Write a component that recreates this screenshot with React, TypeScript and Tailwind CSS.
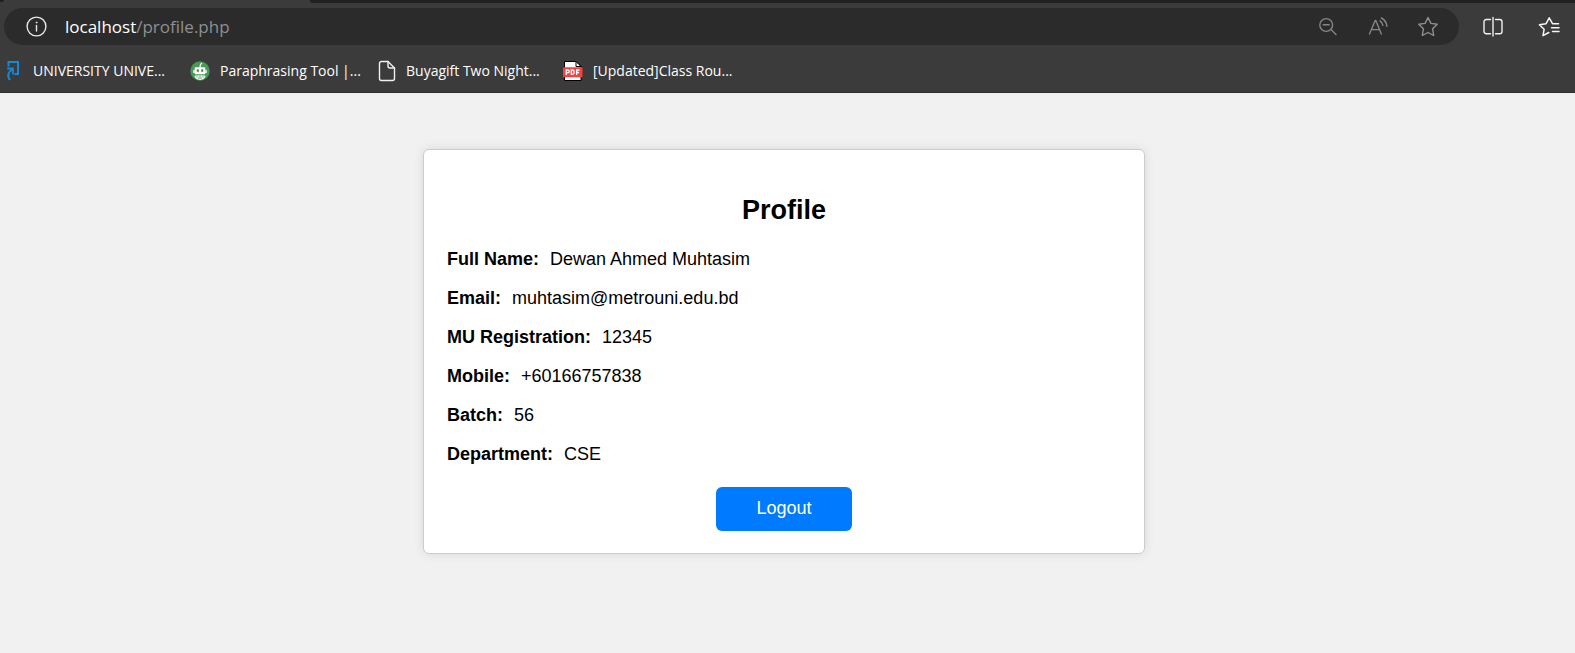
import React from "react";

const iconBase = {
  fill: "none",
  strokeLinecap: "round" as const,
  strokeLinejoin: "round" as const,
};

function InfoIcon() {
  return (
    <svg width="22" height="22" viewBox="0 0 22 22" {...iconBase} stroke="#e8e8e8" strokeWidth="1.4">
      <circle cx="10.500" cy="10.500" r="9.400" />
      <path d="M10.500 9.500v5.500" />
      <circle cx="10.500" cy="6.500" r="0.500" fill="#e8e8e8" strokeWidth="0.8" />
    </svg>
  );
}

function ZoomOutIcon() {
  return (
    <svg width="20" height="20" viewBox="0 0 20 20" {...iconBase} stroke="#858585" strokeWidth="1.4">
      <circle cx="7.200" cy="8" r="6.400" />
      <path d="M4.200 7.700h6M12 12.600l5 5" />
    </svg>
  );
}

function ReadAloudIcon() {
  return (
    <svg width="20" height="20" viewBox="0 0 20 20" {...iconBase} stroke="#858585" strokeWidth="1.4">
      <path d="M1.500 17L7.200 3.500h.6L13.300 17M3.500 12.600h7.900" />
      <path d="M12 3.800c1.500.9 2.500 2.300 2.900 4.600" />
      <path d="M13.300 1c3 1.500 5.200 4.300 5.700 8.400" />
    </svg>
  );
}

function StarIcon() {
  return (
    <svg width="22" height="22" viewBox="0 0 22 22" {...iconBase} stroke="#909090" strokeWidth="1.4">
      <path d="M11 1.500l2.900 5.900 6.300.9-4.600 4.500 1.100 6.700-5.700-3-5.700 3 1.100-6.700-4.600-4.500 6.300-.9z" />
    </svg>
  );
}

function SplitIcon() {
  return (
    <svg width="22" height="22" viewBox="0 0 22 22" {...iconBase} stroke="#f0f0f0" strokeWidth="1.4">
      <path d="M8.500 3.500H4.200A2.200 2.200 0 0 0 2 5.700v9.800a2.200 2.200 0 0 0 2.200 2.200h4.300" />
      <path d="M13.500 3.500h4.300A2.200 2.200 0 0 1 20 5.700v9.800a2.200 2.200 0 0 1-2.200 2.200h-4.300" />
      <path d="M11 1.500v18.500" />
    </svg>
  );
}

function FavoritesIcon() {
  return (
    <svg width="22" height="22" viewBox="0 0 22 22" {...iconBase} stroke="#f5f5f5" strokeWidth="1.5">
      <path d="M20.500 7.700h-6L11.200 1.800 8.100 7.700l-6.700 1 4.700 4.600-1.100 6.400 5.800-3.200" />
      <path d="M13.500 11.700h7.500M14.500 15.500h6.500" />
    </svg>
  );
}

function PortalIcon() {
  return (
    <svg width="14" height="21" viewBox="0 0 14 21" fill="none" stroke="#1389dc" strokeWidth="2">
      <path d="M2.500 6.500V2h9.500v12H8.500" />
      <path d="M1.200 8.500H7v6" strokeWidth="1.800" />
      <path d="M7 8.700C2.500 11.500.5 15.500 4 20" />
    </svg>
  );
}

function RobotIcon() {
  return (
    <svg width="20" height="20" viewBox="0 0 20 20">
      <circle cx="10" cy="10" r="9.700" fill="#4a9a57" />
      <path d="M9.300 6.500L10 3l1.600-1.300.8.700-1.500 1.500-.2 2.600z" fill="#fff" />
      <rect x="4.700" y="6.300" width="10.600" height="7" rx="1" fill="#fff" />
      <path d="M3.300 9h1.400v3H3.300zM15.300 9h1.400v3h-1.400z" fill="#fff" />
      <rect x="6.800" y="8.300" width="2" height="2.500" fill="#3b8a49" />
      <rect x="11.200" y="8.300" width="2" height="2.500" fill="#3b8a49" />
      <path d="M4.500 15.800c0-1 1-1.600 2-1.600h7c1 0 2 .6 2 1.600-1.300 2.300-3.300 3.300-5.500 3.300s-4.200-1-5.500-3.300z" fill="#e9f4eb" />
      <path d="M7 14.500v1.500M10 14.500v1.500M13 14.500v1.500M8 17h4" stroke="#4a9a57" strokeWidth="0.8" />
    </svg>
  );
}

function PageIcon() {
  return (
    <svg width="18" height="22" viewBox="0 0 18 22" {...iconBase} stroke="#f0f0f0" strokeWidth="1.4">
      <path d="M10 1.500H3.500a2 2 0 0 0-2 2v15a2 2 0 0 0 2 2h11a2 2 0 0 0 2-2V8z" />
      <path d="M10 1.500V6a2 2 0 0 0 2 2h4.500" />
    </svg>
  );
}

function PdfIcon() {
  return (
    <svg width="20" height="20" viewBox="0 0 20 20">
      <path d="M1.500.5h12l4.500 4.500v14.500H1.500z" fill="#fff" stroke="#000" />
      <path d="M13 .5l5 5h-5z" fill="#fff" stroke="#000" />
      <rect x="0" y="6.300" width="19.500" height="10" rx="1" fill="#f8403f" />
      <g fill="none" stroke="#fff" strokeWidth="1.300">
        <path d="M3.200 14V9h1.600a1.400 1.400 0 0 1 0 2.900H3.200" />
        <path d="M8.300 9v4.400h1a1.800 1.800 0 0 0 1.800-1.800v-.8A1.800 1.800 0 0 0 9.300 9z" />
        <path d="M13.600 14V9h3M13.600 11.500h2.500" />
      </g>
    </svg>
  );
}

const bookmarks = [
  { label: "UNIVERSITY UNIVE...", icon: <PortalIcon />, box: "w-[164px] gap-[13px]" },
  { label: "Paraphrasing Tool |...", icon: <RobotIcon />, box: "w-[168px] gap-[10px]" },
  { label: "Buyagift Two Night...", icon: <PageIcon />, box: "w-[165px] gap-[10px]" },
  { label: "[Updated]Class Rou...", icon: <PdfIcon />, box: "w-[170px] gap-[10px]" },
];

const profile = [
  ["Full Name:", "Dewan Ahmed Muhtasim"],
  ["Email:", "muhtasim@metrouni.edu.bd"],
  ["MU Registration:", "12345"],
  ["Mobile:", "+60166757838"],
  ["Batch:", "56"],
  ["Department:", "CSE"],
];

function BrowserBar() {
  return (
    <header className="bg-[#3b3b3b] font-['Open_Sans','Noto_Sans',sans-serif] text-white">
      <div className="flex h-[3px] justify-between">
        <div className="h-[2px] w-[4px] rounded-br-full bg-[#202020]" />
        <div className="ml-[306px] flex-1 rounded-bl-[6px] bg-[#202020]" />
      </div>
      <div className="flex items-center pt-[5px] pr-[15px] pl-[4px]">
        <form
          className="flex h-[37px] flex-1 items-center rounded-full bg-[#2b2b2b] pr-[20px] pl-[22px]"
          onSubmit={(e) => e.preventDefault()}
        >
          <button type="button" aria-label="Site information">
            <InfoIcon />
          </button>
          <label htmlFor="address" className="pl-[17px] text-[17px] leading-6">
            localhost
          </label>
          <input
            id="address"
            type="text"
            defaultValue="/profile.php"
            className="min-w-0 flex-1 bg-transparent text-[17px] leading-6 text-[#8f8f8f] outline-none"
          />
          <div className="flex items-center gap-[29px]">
            <button type="button" aria-label="Zoom out">
              <ZoomOutIcon />
            </button>
            <button type="button" aria-label="Read aloud">
              <ReadAloudIcon />
            </button>
            <button type="button" aria-label="Add to favorites">
              <StarIcon />
            </button>
          </div>
        </form>
        <div className="flex items-center gap-[34px] pl-[23px]">
          <button type="button" aria-label="Split screen">
            <SplitIcon />
          </button>
          <button type="button" aria-label="Favorites">
            <FavoritesIcon />
          </button>
        </div>
      </div>
      <nav className="flex h-12 items-center gap-5 border-b border-[#2f2f2f] pt-[4px] pl-[6px]">
        {bookmarks.map((b) => (
          <a key={b.label} href="#" className={`flex items-center whitespace-nowrap text-[14px] leading-5 ${b.box}`}>
            <span className="shrink-0">{b.icon}</span>
            {b.label}
          </a>
        ))}
      </nav>
    </header>
  );
}

export default function App() {
  return (
    <div className="min-h-screen bg-[#f1f1f1]">
      <BrowserBar />
      <main className="pt-14 pr-[23px] pl-4 font-['Liberation_Sans',Arial,sans-serif] text-[18px] leading-[21px] text-black">
        <section className="mx-auto flex max-w-[722px] flex-col items-center rounded-[6px] border border-[#cccccc] bg-white px-[23px] py-[22px] shadow-[0_0_11px_rgba(0,0,0,0.1)]">
          <h2 className="my-[23px] text-[27px] leading-[31px] font-bold">Profile</h2>
          <dl className="flex w-full flex-col gap-[18px]">
            {profile.map(([name, value]) => (
              <div key={name} className="flex gap-[11px]">
                <dt className="font-bold">{name}</dt>
                <dd>{value}</dd>
              </div>
            ))}
          </dl>
          <button type="button" className="mt-[22px] rounded-[6px] bg-[#007bff] px-10 pt-[11px] pb-[12px] text-white">
            Logout
          </button>
        </section>
      </main>
    </div>
  );
}
